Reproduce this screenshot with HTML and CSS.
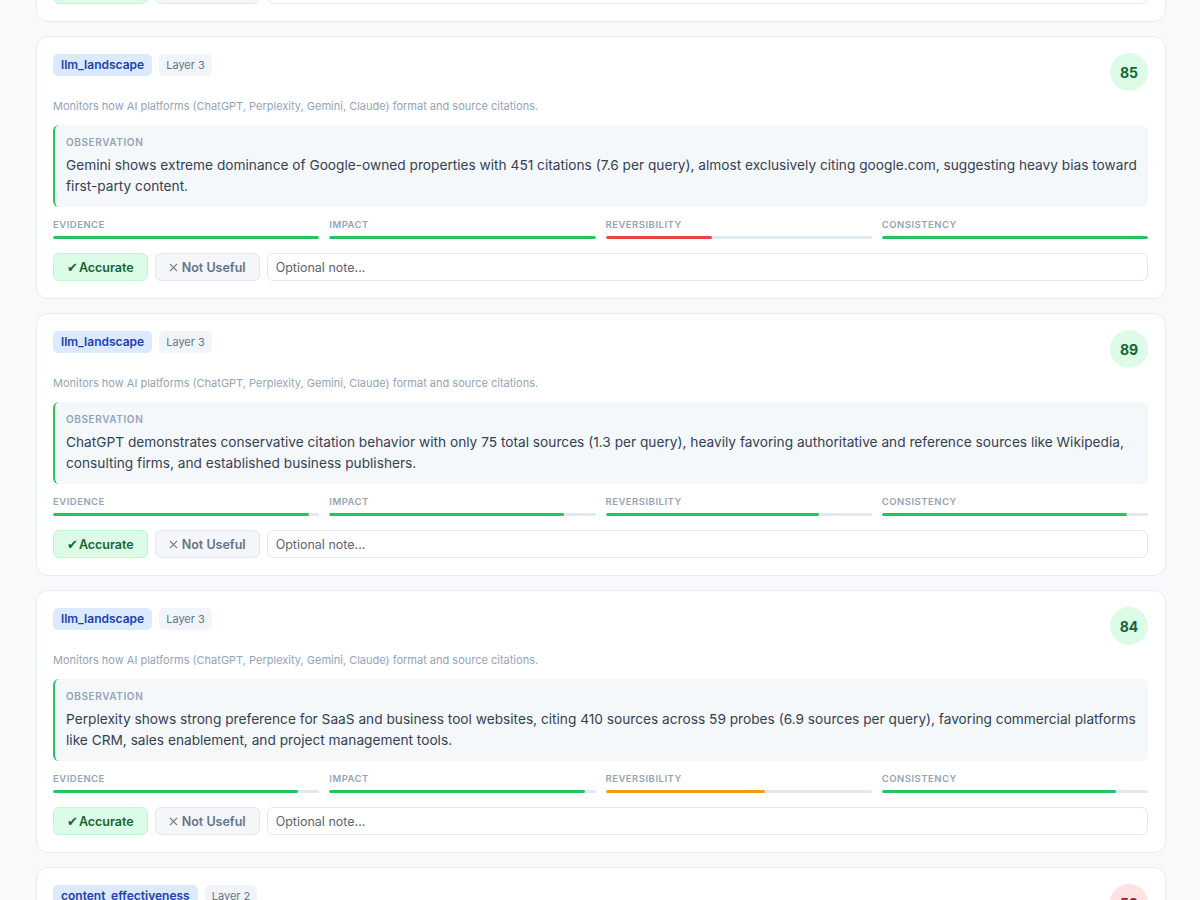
FILE: index.html
```html
<!DOCTYPE html>
<html lang="en">

<head>
    <meta charset="UTF-8">
    <meta name="viewport" content="width=device-width, initial-scale=1.0">
    <title>Insights Review</title>
    <link rel="stylesheet" href="styles.css">
</head>

<body>
    <div class="feed">
        <!-- previous card, scrolled mostly out of view -->
        <div class="card">
            <div class="card-head">
                <div class="tags">
                    <span class="tag tag-module">llm_landscape</span>
                    <span class="tag tag-layer">Layer 3</span>
                </div>
                <div class="score score-good">87</div>
            </div>
            <p class="desc">Monitors how AI platforms (ChatGPT, Perplexity, Gemini, Claude) format and source citations.</p>
            <div class="obs">
                <div class="obs-label">Observation</div>
                <div class="obs-text">Claude cites a balanced mix of sources across categories, with a slight preference for documentation and long-form editorial content over vendor landing pages and product marketing sites.</div>
            </div>
            <div class="metrics">
                <div class="metric"><div class="metric-label">Evidence</div><div class="bar"><div class="fill green" style="width: 90%"></div></div></div>
                <div class="metric"><div class="metric-label">Impact</div><div class="bar"><div class="fill green" style="width: 85%"></div></div></div>
                <div class="metric"><div class="metric-label">Reversibility</div><div class="bar"><div class="fill green" style="width: 75%"></div></div></div>
                <div class="metric"><div class="metric-label">Consistency</div><div class="bar"><div class="fill green" style="width: 90%"></div></div></div>
            </div>
            <div class="actions">
                <button class="btn btn-ok"><span class="check">✔</span>Accurate</button>
                <button class="btn btn-no"><svg class="x" viewBox="0 0 10 10"><path d="M1 1L9 9M9 1L1 9"/></svg>Not Useful</button>
                <input class="note" type="text" placeholder="Optional note...">
            </div>
        </div>

        <div class="card">
            <div class="card-head">
                <div class="tags">
                    <span class="tag tag-module">llm_landscape</span>
                    <span class="tag tag-layer">Layer 3</span>
                </div>
                <div class="score score-good">85</div>
            </div>
            <p class="desc">Monitors how AI platforms (ChatGPT, Perplexity, Gemini, Claude) format and source citations.</p>
            <div class="obs">
                <div class="obs-label">Observation</div>
                <div class="obs-text">Gemini shows extreme dominance of Google-owned properties with 451 citations (7.6 per query), almost exclusively citing google.com, suggesting heavy bias toward first-party content.</div>
            </div>
            <div class="metrics">
                <div class="metric"><div class="metric-label">Evidence</div><div class="bar"><div class="fill green" style="width: 100%"></div></div></div>
                <div class="metric"><div class="metric-label">Impact</div><div class="bar"><div class="fill green" style="width: 100%"></div></div></div>
                <div class="metric"><div class="metric-label">Reversibility</div><div class="bar"><div class="fill red" style="width: 40%"></div></div></div>
                <div class="metric"><div class="metric-label">Consistency</div><div class="bar"><div class="fill green" style="width: 100%"></div></div></div>
            </div>
            <div class="actions">
                <button class="btn btn-ok"><span class="check">✔</span>Accurate</button>
                <button class="btn btn-no"><svg class="x" viewBox="0 0 10 10"><path d="M1 1L9 9M9 1L1 9"/></svg>Not Useful</button>
                <input class="note" type="text" placeholder="Optional note...">
            </div>
        </div>

        <div class="card">
            <div class="card-head">
                <div class="tags">
                    <span class="tag tag-module">llm_landscape</span>
                    <span class="tag tag-layer">Layer 3</span>
                </div>
                <div class="score score-good">89</div>
            </div>
            <p class="desc">Monitors how AI platforms (ChatGPT, Perplexity, Gemini, Claude) format and source citations.</p>
            <div class="obs">
                <div class="obs-label">Observation</div>
                <div class="obs-text">ChatGPT demonstrates conservative citation behavior with only 75 total sources (1.3 per query), heavily favoring authoritative and reference sources like Wikipedia, consulting firms, and established business publishers.</div>
            </div>
            <div class="metrics">
                <div class="metric"><div class="metric-label">Evidence</div><div class="bar"><div class="fill green" style="width: 96%"></div></div></div>
                <div class="metric"><div class="metric-label">Impact</div><div class="bar"><div class="fill green" style="width: 88%"></div></div></div>
                <div class="metric"><div class="metric-label">Reversibility</div><div class="bar"><div class="fill green" style="width: 80%"></div></div></div>
                <div class="metric"><div class="metric-label">Consistency</div><div class="bar"><div class="fill green" style="width: 92%"></div></div></div>
            </div>
            <div class="actions">
                <button class="btn btn-ok"><span class="check">✔</span>Accurate</button>
                <button class="btn btn-no"><svg class="x" viewBox="0 0 10 10"><path d="M1 1L9 9M9 1L1 9"/></svg>Not Useful</button>
                <input class="note" type="text" placeholder="Optional note...">
            </div>
        </div>

        <div class="card">
            <div class="card-head">
                <div class="tags">
                    <span class="tag tag-module">llm_landscape</span>
                    <span class="tag tag-layer">Layer 3</span>
                </div>
                <div class="score score-good">84</div>
            </div>
            <p class="desc">Monitors how AI platforms (ChatGPT, Perplexity, Gemini, Claude) format and source citations.</p>
            <div class="obs">
                <div class="obs-label">Observation</div>
                <div class="obs-text">Perplexity shows strong preference for SaaS and business tool websites, citing 410 sources across 59 probes (6.9 sources per query), favoring commercial platforms like CRM, sales enablement, and project management tools.</div>
            </div>
            <div class="metrics">
                <div class="metric"><div class="metric-label">Evidence</div><div class="bar"><div class="fill green" style="width: 92%"></div></div></div>
                <div class="metric"><div class="metric-label">Impact</div><div class="bar"><div class="fill green" style="width: 96%"></div></div></div>
                <div class="metric"><div class="metric-label">Reversibility</div><div class="bar"><div class="fill orange" style="width: 60%"></div></div></div>
                <div class="metric"><div class="metric-label">Consistency</div><div class="bar"><div class="fill green" style="width: 88%"></div></div></div>
            </div>
            <div class="actions">
                <button class="btn btn-ok"><span class="check">✔</span>Accurate</button>
                <button class="btn btn-no"><svg class="x" viewBox="0 0 10 10"><path d="M1 1L9 9M9 1L1 9"/></svg>Not Useful</button>
                <input class="note" type="text" placeholder="Optional note...">
            </div>
        </div>

        <div class="card">
            <div class="card-head">
                <div class="tags">
                    <span class="tag tag-module">content_effectiveness</span>
                    <span class="tag tag-layer">Layer 2</span>
                </div>
                <div class="score score-bad">52</div>
            </div>
            <p class="desc">Measures how well published content gets picked up and cited by AI platforms.</p>
        </div>
    </div>
</body>

</html>
```

FILE: styles.css
```css
/* page */
body {
    margin: 0;
    font-family: Inter, "Noto Sans", Arial, sans-serif;
    background-color: #f8f9fb;
    color: #334155;
    overflow: hidden;
}

/* list of cards, scrolled down a bit */
.feed {
    width: 1130px;
    margin: -241px 0 0 36px;
    display: flex;
    flex-direction: column;
    gap: 14px;
}

.card {
    background-color: #fff;
    border: 1px solid #e8ebf1;
    border-radius: 12px;
    padding: 16px 17px 17px 16px;
}

.card-head {
    display: flex;
    justify-content: space-between;
    align-items: flex-start;
    height: 38px;
}

.tags {
    display: flex;
    gap: 7px;
    padding-top: 1px;
}

.tag {
    font-size: 12px;
    line-height: 14px;
    padding: 4px 8px;
    border-radius: 5px;
}

.tag-module {
    background-color: #dbeafe;
    color: #1e40af;
    font-weight: 600;
}

.tag-layer {
    background-color: #f1f5f9;
    color: #64748b;
    font-size: 11px;
    padding: 4px 7px;
}

.score {
    width: 38px;
    height: 38px;
    border-radius: 50%;
    display: flex;
    align-items: center;
    justify-content: center;
    font-size: 14px;
    font-weight: 700;
}

.score-good {
    background-color: #dcfce7;
    color: #166534;
}

.score-bad {
    background-color: #fee2e2;
    color: #991b1b;
}

.desc {
    margin: 7px 0 11px;
    font-size: 11px;
    line-height: 16px;
    color: #94a3b8;
}

/* observation box */
.obs {
    background-color: #f5f8fb;
    border-left: 2px solid #22c55e;
    border-radius: 6px;
    padding: 10px 6px 10px 11px;
}

.obs-label {
    font-size: 10px;
    line-height: 14px;
    font-weight: 600;
    letter-spacing: 0.6px;
    text-transform: uppercase;
    color: #94a3b8;
    margin-bottom: 6px;
}

.obs-text {
    font-size: 13.7px;
    line-height: 21px;
    color: #334155;
}

/* score bars */
.metrics {
    display: grid;
    grid-template-columns: repeat(4, 1fr);
    gap: 10px;
    margin-top: 11px;
}

.metric-label {
    font-size: 9.5px;
    line-height: 14px;
    font-weight: 600;
    letter-spacing: 0.5px;
    text-transform: uppercase;
    color: #94a3b8;
    margin-bottom: 4px;
}

.bar {
    height: 3px;
    background-color: #e2e8f0;
    border-radius: 2px;
    overflow: hidden;
}

.fill {
    height: 100%;
    border-radius: 2px;
}

.green { background-color: #22c55e; }
.red { background-color: #ef4444; }
.orange { background-color: #f59e0b; }

/* feedback row */
.actions {
    display: flex;
    gap: 7px;
    margin-top: 14px;
    height: 28px;
}

.btn {
    font-family: inherit;
    font-size: 12.5px;
    font-weight: 600;
    border-radius: 6px;
    padding: 0 13px;
    display: flex;
    align-items: center;
    cursor: pointer;
}

.check {
    font-family: "DejaVu Sans", sans-serif;
    font-size: 13px;
    margin-right: 1px;
}

.x {
    width: 9px;
    height: 9px;
    margin-right: 4px;
    stroke: currentColor;
    stroke-width: 1.2;
    fill: none;
}

.btn-ok {
    background-color: #dcfce7;
    border: 1px solid #bbf7d0;
    color: #166534;
}

.btn-no {
    background-color: #f4f6f9;
    border: 1px solid #e2e8f0;
    color: #64748b;
}

.note {
    flex: 1;
    font-family: inherit;
    font-size: 12.5px;
    padding: 0 8px;
    border: 1px solid #e5e9ef;
    border-radius: 6px;
    color: #334155;
}

.note::placeholder {
    color: #5b6472;
}
```
